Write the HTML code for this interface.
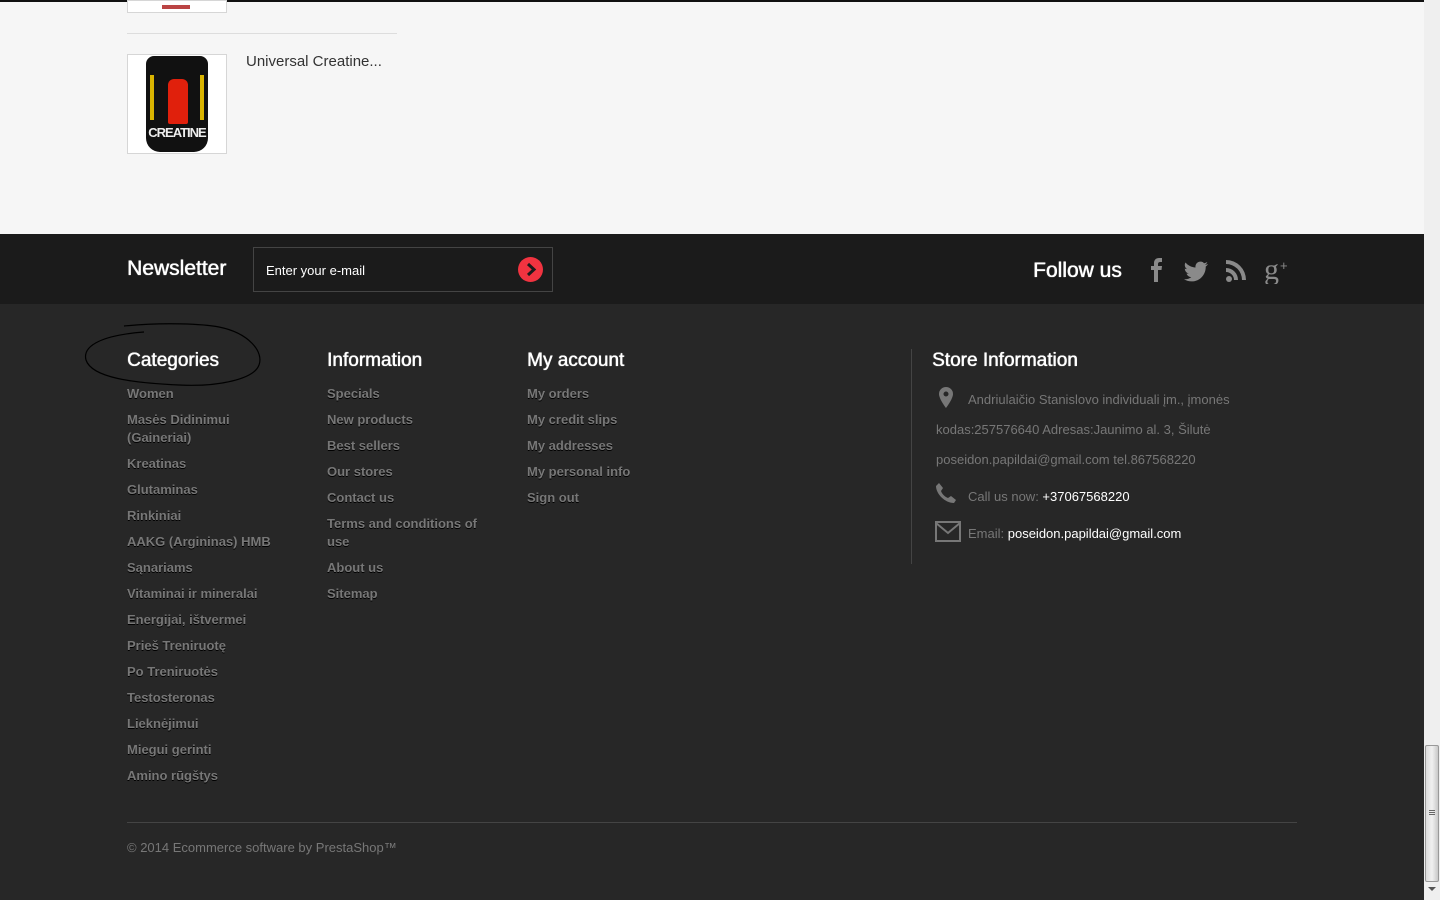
<!DOCTYPE html>
<html><head><meta charset="utf-8"><style>
*{margin:0;padding:0;box-sizing:border-box}
body{width:1440px;height:900px;overflow:hidden;font-family:"Liberation Sans",sans-serif;background:#272727;position:relative}
.top{position:absolute;left:0;top:0;width:1424px;height:234px;background:#f6f6f6;border-top:2px solid #111}
.thumb{position:absolute;left:127px;width:100px;background:#fff;border:1px solid #d6d6d6}
.band{position:absolute;left:0;top:234px;width:1424px;height:70px;background:#1b1b1b}
.foot{position:absolute;left:0;top:304px;width:1424px;height:596px;background:#272727}
.h{position:absolute;color:#fff;font-family:"Liberation Sans",sans-serif;font-size:19px;font-weight:normal;text-shadow:0 0 0.8px #fff,0.4px 0 0 #fff}
.col{position:absolute;top:385px;width:180px}
.col a{display:block;color:#777;font-weight:bold;font-size:13px;line-height:18px;margin-bottom:8px;text-decoration:none;text-shadow:0 1px #000}
.si{position:absolute;left:936px;font-size:13px;color:#777}
.si b{color:#fff;font-weight:normal}
.sb{position:absolute;left:1424px;top:0;width:16px;height:900px;background:#efefef}
</style></head><body>
<div class="top">
 <div class="thumb" style="top:-2px;height:13px"><div style="position:absolute;left:34px;top:4px;width:28px;height:4px;background:#b44"></div></div>
 <div style="position:absolute;left:127px;top:31px;width:270px;border-top:1px solid #ddd"></div>
 <div class="thumb" style="top:52px;height:100px">
  <div style="position:absolute;left:18px;top:1px;width:62px;height:96px;background:#111;border-radius:8px 8px 14px 14px"></div>
  <div style="position:absolute;left:22px;top:20px;width:4px;height:45px;background:#d9b400"></div>
  <div style="position:absolute;left:72px;top:20px;width:4px;height:45px;background:#d9b400"></div>
  <div style="position:absolute;left:40px;top:24px;width:20px;height:45px;background:#e0200c;border-radius:6px 6px 2px 2px"></div>
  <div style="position:absolute;left:20px;top:70px;width:58px;font:bold 13px 'Liberation Sans Narrow','Liberation Sans',sans-serif;color:#eee;text-align:center;letter-spacing:-1px">CREATINE</div>
 </div>
 <div style="position:absolute;left:246px;top:51px;font-family:'Liberation Sans',sans-serif;font-size:15px;color:#333">Universal Creatine...</div>
</div>
<div class="band">
 <div class="h" style="left:127px;top:23px;font-size:21px">Newsletter</div>
 <div style="position:absolute;left:253px;top:13px;width:300px;height:45px;border:1px solid #444;">
  <span style="position:absolute;left:12px;top:15px;color:#fff;font-size:13px">Enter your e-mail</span>
  <div style="position:absolute;left:264px;top:9px;width:25px;height:25px;border-radius:50%;background:#f13340"><svg width="25" height="25" viewBox="0 0 25 25"><path d="M10 7l6 5.5-6 5.5" stroke="#1b1b1b" stroke-width="3" fill="none"/></svg></div>
 </div>
 <div class="h" style="left:1033px;top:25px;font-size:21px">Follow us</div>
 <svg style="position:absolute;left:1147px;top:22px" width="150" height="28" viewBox="0 0 150 28" fill="#8a8a8a">
  <path d="M7 26V14H4V10h3V7c0-3 2-5 5-5h3v4h-2c-1 0-2 .5-2 2v2h4l-.5 4H11v12z"/>
  <path d="M61 8c-1 .5-2 .7-3 .8 1-.6 2-1.6 2.3-2.8-1 .6-2 1-3.2 1.2A5 5 0 0048.5 11.5c-4-.2-7.7-2.1-10-5-1.4 2.3-.6 5.2 1.5 6.6-.8 0-1.6-.2-2.2-.6 0 2.4 1.7 4.5 4 5-.7.2-1.5.2-2.2.1.6 2 2.5 3.4 4.7 3.5-2 1.6-4.6 2.4-7.3 2.1 2.2 1.4 4.9 2.2 7.6 2.2 9.2 0 14.4-7.8 14.1-14.8 1-.7 1.8-1.6 2.4-2.6z"/>
  <circle cx="82" cy="23" r="3"/><path d="M79 12a12 12 0 0112 12h-4a8 8 0 00-8-8z"/><path d="M79 4a20 20 0 0120 20h-4A16 16 0 0079 8z"/>
  <text x="117" y="23" font-family="Liberation Serif,serif" font-size="30" fill="#8a8a8a">g</text><text x="133" y="14" font-family="Liberation Sans,sans-serif" font-size="13" fill="#8a8a8a">+</text>
 </svg>
</div>
<div class="foot"></div>
<svg style="position:absolute;left:84px;top:320px" width="182" height="70"><path d="M40 6c40-4 80-2 95 1 30 6 45 25 40 38-5 14-40 22-80 20C50 63 8 58 2 40 -2 25 20 15 60 12" fill="none" stroke="#000" stroke-width="1.2"/></svg>
<div class="h" style="left:127px;top:350px">Categories</div>
<div class="h" style="left:327px;top:350px">Information</div>
<div class="h" style="left:527px;top:350px">My account</div>
<div class="h" style="left:932px;top:350px">Store Information</div>
<div class="col" style="left:127px"><a>Women</a><a>Masės Didinimui<br>(Gaineriai)</a><a>Kreatinas</a><a>Glutaminas</a><a>Rinkiniai</a><a>AAKG (Argininas) HMB</a><a>Sąnariams</a><a>Vitaminai ir mineralai</a><a>Energijai, ištvermei</a><a>Prieš Treniruotę</a><a>Po Treniruotės</a><a>Testosteronas</a><a>Lieknėjimui</a><a>Miegui gerinti</a><a>Amino rūgštys</a></div>
<div class="col" style="left:327px"><a>Specials</a><a>New products</a><a>Best sellers</a><a>Our stores</a><a>Contact us</a><a>Terms and conditions of<br>use</a><a>About us</a><a>Sitemap</a></div>
<div class="col" style="left:527px"><a>My orders</a><a>My credit slips</a><a>My addresses</a><a>My personal info</a><a>Sign out</a></div>
<div style="position:absolute;left:911px;top:349px;height:215px;border-left:1px solid #444"></div>
<svg style="position:absolute;left:937px;top:386px" width="18" height="24" viewBox="0 0 18 24"><path d="M9 1a7 7 0 00-7 7c0 5 7 14 7 14s7-9 7-14a7 7 0 00-7-7zm0 4.5a2.5 2.5 0 110 5 2.5 2.5 0 010-5z" fill="#777" fill-rule="evenodd"/></svg>
<div class="si" style="left:968px;top:392px">Andriulaičio Stanislovo individuali įm., įmonės</div>
<div class="si" style="top:422px">kodas:257576640 Adresas:Jaunimo al. 3, Šilutė</div>
<div class="si" style="top:452px">poseidon.papildai@gmail.com tel.867568220</div>
<svg style="position:absolute;left:935px;top:482px" width="22" height="22" viewBox="0 0 22 22"><path d="M4 1l4 5-2 3c1 3 4 6 7 7l3-2 5 4-2 3C10 21 1 12 1 4z" fill="#777"/></svg>
<div class="si" style="left:968px;top:489px">Call us now: <b>+37067568220</b></div>
<svg style="position:absolute;left:935px;top:521px" width="26" height="21"><rect x="1" y="1" width="24" height="19" fill="none" stroke="#777" stroke-width="2"/><path d="M1 2l12 10L25 2" fill="none" stroke="#777" stroke-width="2"/></svg>
<div class="si" style="left:968px;top:526px">Email: <b>poseidon.papildai@gmail.com</b></div>
<div style="position:absolute;left:127px;top:822px;width:1170px;border-top:1px solid #444"></div>
<div style="position:absolute;left:127px;top:840px;font-size:13px;color:#777">© 2014 Ecommerce software by PrestaShop™</div>
<div class="sb">
 <div style="position:absolute;left:1px;top:745px;width:14px;height:137px;background:linear-gradient(90deg,#dcdcdc,#f0f0f0,#c8c8c8);border:1px solid #999;border-radius:2px"></div>
 <div style="position:absolute;left:5px;top:810px;width:6px;height:1px;background:#666;box-shadow:0 2px #666,0 4px #666"></div>
 <div style="position:absolute;left:4px;top:887px;border:4px solid transparent;border-top:4px solid #555"></div>
</div>
</body></html>
